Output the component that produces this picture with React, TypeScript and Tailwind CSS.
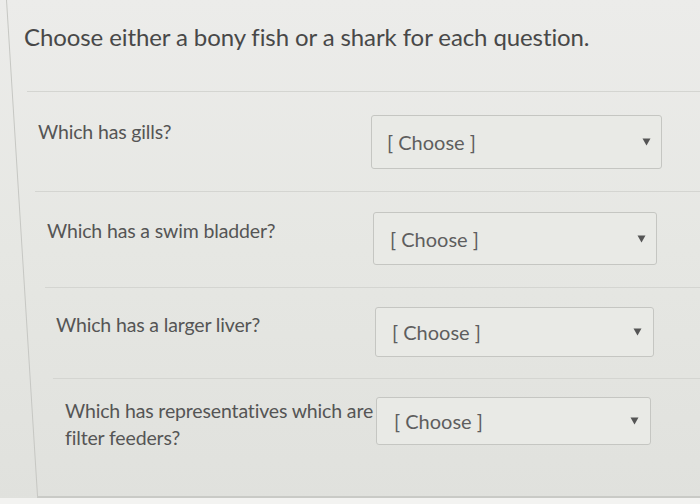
import React from "react";

type Row = {
  q: string[];
  rowCls: string;
  labelCls: string;
  selCls: string;
  chooseCls: string;
  arrowCls: string;
};

function Arrow({ cls }: { cls: string }) {
  return (
    <svg width="9" height="8" viewBox="0 0 9 8" className={cls}>
      <path d="M0.5 0.5 L8.5 0.5 L4.5 7.5 Z" fill="#555555" />
    </svg>
  );
}

export default function App() {
  const rows: Row[] = [
    {
      q: ["Which has gills?"],
      rowCls: "pt-[23px] pb-[22px]",
      labelCls: "pl-[38px] w-[371px] pt-[3px]",
      selCls: "w-[291px] h-[54px]",
      chooseCls: "pl-[15px]",
      arrowCls: "mr-[10px]",
    },
    {
      q: ["Which has a swim bladder?"],
      rowCls: "pt-[20px] pb-[22px]",
      labelCls: "pl-[47px] w-[373px] pt-[5px]",
      selCls: "w-[284px] h-[53px]",
      chooseCls: "pl-[16px]",
      arrowCls: "mr-[10px]",
    },
    {
      q: ["Which has a larger liver?"],
      rowCls: "pt-[19px] pb-[21px]",
      labelCls: "pl-[56px] w-[375px] pt-[4px]",
      selCls: "w-[279px] h-[50px]",
      chooseCls: "pl-[16px]",
      arrowCls: "mr-[11px]",
    },
    {
      q: ["Which has representatives which are", "filter feeders?"],
      rowCls: "pt-[18px] pb-[45px]",
      labelCls: "pl-[65px] w-[376px] pt-0",
      selCls: "w-[275px] h-[48px]",
      chooseCls: "pl-[17px]",
      arrowCls: "mr-[11px]",
    },
  ];
  const dividers = ["ml-[35px]", "ml-[45px]", "ml-[53px]"];

  return (
    <div className="relative w-[700px] h-[504px] overflow-hidden bg-gradient-to-b from-[#ececea] via-[#e6e7e3] to-[#e0e1dd] font-['Lato','Noto_Sans',sans-serif] text-[#4b4b4b]">
      {/* slanted left edge of the panel (photo perspective) */}
      <div className="absolute left-[6px] top-0 w-px h-[497px] bg-[#c6c7c3] origin-top -rotate-[3.58deg]" />

      <div className="flex flex-col">
        <div className="pl-[24px] pt-[22px] text-[24px] leading-[30px] text-[#484848] tracking-[-0.1px]">
          Choose either a bony fish or a shark for each question.
        </div>
        <div className="mt-[39px] ml-[27px] h-px bg-[#d4d5d1]" />

        {rows.map((r, i) => (
          <div key={i} className="flex flex-col">
            <div className={`flex items-start ${r.rowCls}`}>
              <div className={`${r.labelCls} text-[19.5px] leading-[27px] tracking-[-0.15px] text-[#555555]`}>
                {r.q.map((l, j) => (
                  <div key={j} className="whitespace-nowrap">{l}</div>
                ))}
              </div>
              <div
                className={`${r.selCls} flex items-center justify-between rounded-[3px] border border-[#c5c6c2] bg-[#e9eae6]`}
              >
                <span className={`${r.chooseCls} text-[20px] text-[#5e5e5e]`}>[ Choose ]</span>
                <Arrow cls={r.arrowCls} />
              </div>
            </div>
            {i < 3 ? (
              <div className={`${dividers[i]} h-px bg-[#d4d5d1]`} />
            ) : (
              <div className="ml-[37px] h-[2px] bg-[#c9cac6]" />
            )}
          </div>
        ))}
        <div className="h-[10px] bg-[#f3f3f1]" />
      </div>
    </div>
  );
}
